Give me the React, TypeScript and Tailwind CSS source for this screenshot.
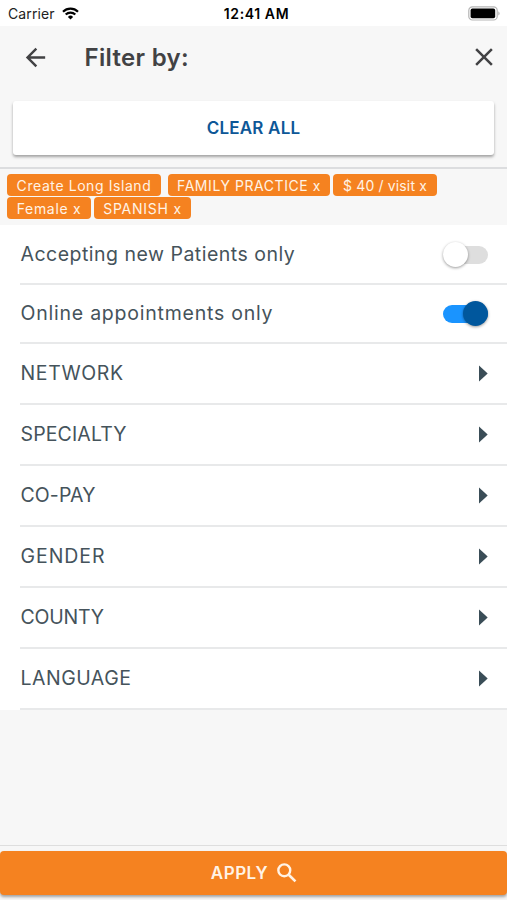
import { MdArrowBack, MdClose } from 'react-icons/md';

interface Chip {
  label: string;
  className: string;
}

interface ToggleRow {
  label: string;
  className: string;
  on: boolean;
}

interface Section {
  label: string;
  className: string;
}

const chipRows: Chip[][] = [
  [
    { label: 'Create Long Island', className: 'w-[154px] mr-[7px] tracking-[0.58px]' },
    { label: 'FAMILY PRACTICE x', className: 'w-[162px] mr-[3px] tracking-[0.56px]' },
    { label: '$ 40 / visit x', className: 'w-[104px] tracking-[0.15px]' },
  ],
  [
    { label: 'Female x', className: 'w-[84px] mr-[3px] tracking-[0.7px]' },
    { label: 'SPANISH x', className: 'w-[97px] tracking-[0.75px]' },
  ],
];

const toggles: ToggleRow[] = [
  { label: 'Accepting new Patients only', className: 'tracking-[0.49px]', on: false },
  { label: 'Online appointments only', className: 'tracking-[0.77px]', on: true },
];

const sections: Section[] = [
  { label: 'NETWORK', className: 'tracking-[0.64px]' },
  { label: 'SPECIALTY', className: 'tracking-[0.13px]' },
  { label: 'CO-PAY', className: 'tracking-[0.1px]' },
  { label: 'GENDER', className: 'tracking-[0.95px]' },
  { label: 'COUNTY', className: 'tracking-[-0.2px]' },
  { label: 'LANGUAGE', className: 'tracking-[0.5px]' },
];

function StatusBar() {
  return (
    <div className="grid h-[26px] grid-cols-3 items-center bg-white pl-2 pr-[7px] text-[14px] text-[#222]">
      <div className="flex items-center gap-[7px]">
        <span className="tracking-[0.1px]">Carrier</span>
        <svg width="17" height="13" viewBox="0 0 17 13" fill="none" stroke="#000" strokeWidth="2.2">
          <path d="M1 4.7a10.7 10.7 0 0 1 15 0" />
          <path d="M3.7 7.5a6.9 6.9 0 0 1 9.6 0" />
          <path d="M8.5 12.6 5.9 9.9a3.7 3.7 0 0 1 5.2 0z" fill="#000" stroke="none" />
        </svg>
      </div>
      <span className="whitespace-nowrap pl-[5px] text-center font-semibold tracking-[0.6px] text-black">12:41 AM</span>
      <div className="flex items-center justify-end">
        <svg width="32" height="15" viewBox="0 0 32 15">
          <rect x="0.8" y="0.8" width="28.4" height="13.2" rx="3.6" fill="#fff" stroke="#b5b5b5" strokeWidth="1.2" />
          <rect x="2.6" y="2.6" width="24.6" height="9.6" rx="1.8" fill="#000" />
          <path d="M30.4 5.3a2.5 2.5 0 0 1 0 4.2z" fill="#aaa" />
        </svg>
      </div>
    </div>
  );
}

function SearchIcon() {
  return (
    <svg width="26" height="26" viewBox="0 0 24 24" fill="none" stroke="currentColor">
      <circle cx="9.5" cy="9.5" r="5.5" strokeWidth="2.2" />
      <path d="M13.6 13.6 19.8 19.8" strokeWidth="2.4" />
    </svg>
  );
}

function Toggle({ on }: { on: boolean }) {
  return (
    <span
      role="switch"
      aria-checked={on}
      className={`flex h-[18px] w-[45px] items-center rounded-full ${on ? 'justify-end bg-[#1a94ff]' : 'justify-start bg-[#dedede]'}`}
    >
      <span
        className={`h-[25px] w-[25px] shrink-0 rounded-full shadow-[0_1px_3px_rgba(0,0,0,0.4)] ${on ? 'bg-[#00579d]' : 'bg-white'}`}
      />
    </span>
  );
}

export default function App() {
  return (
    <div className="flex h-[900px] w-[507px] flex-col overflow-hidden bg-[#f7f7f7] font-['Inter','Liberation_Sans',sans-serif] text-[#45535b]">
      <StatusBar />

      <header className="flex h-[62px] items-center pl-[20.5px] pr-[8px] text-[#424244]">
        <MdArrowBack size={29} />
        <h1 className="ml-[35px] flex-1 pt-[2px] text-[24px] font-semibold tracking-[0.3px]">Filter by:</h1>
        <MdClose size={30} />
      </header>

      <div className="h-[81px] border-b-2 border-[#dcdddf] px-[13px] pt-[13px]">
        <button
          type="button"
          className="block h-[54px] w-full rounded-[3px] bg-white pt-[2px] text-[17px] font-semibold tracking-[0.2px] text-[#0d5797] shadow-[0_2px_3px_rgba(0,0,0,0.35)]"
        >
          CLEAR ALL
        </button>
      </div>

      <div className="flex h-[56px] flex-col gap-[1px] pl-[7px] pt-[5px]">
        {chipRows.map((row, i) => (
          <div key={i} className="flex">
            {row.map((chip) => (
              <span
                key={chip.label}
                className={`flex h-[22px] items-center justify-center whitespace-nowrap rounded-[4px] bg-[#f58220] text-[14px] text-[#fff3e6] ${chip.className}`}
              >
                {chip.label}
              </span>
            ))}
          </div>
        ))}
      </div>

      <ul className="bg-white pl-[20px] pt-px text-[19.5px]">
        {toggles.map((row) => (
          <li key={row.label} className="flex h-[59px] items-center justify-between border-b-2 border-[#e8e9ea] pr-[19px]">
            <span className={`pl-[0.5px] pt-px ${row.className}`}>{row.label}</span>
            <Toggle on={row.on} />
          </li>
        ))}
        {sections.map((section) => (
          <li key={section.label} className="flex h-[61px] items-center justify-between border-b-2 border-[#e8e9ea] pr-[19px]">
            <span className={`pl-[0.5px] pt-px ${section.className}`}>{section.label}</span>
            <svg width="9" height="17" viewBox="0 0 9 17">
              <path d="M0 0.4 8.7 8.5 0 16.6z" fill="#3a4d57" />
            </svg>
          </li>
        ))}
      </ul>

      <footer className="mt-auto h-[55px] border-t border-[#dedede] pt-[5px]">
        <button
          type="button"
          className="flex h-[44px] w-full items-center justify-center gap-[6px] rounded-[4px] bg-[#f58220] pl-[4px] text-[17px] font-semibold text-[#fff3e6] shadow-[0_2px_3px_rgba(0,0,0,0.35)]"
        >
          <span className="pt-[2px] tracking-[0.5px]">APPLY</span>
          <SearchIcon />
        </button>
      </footer>
    </div>
  );
}
